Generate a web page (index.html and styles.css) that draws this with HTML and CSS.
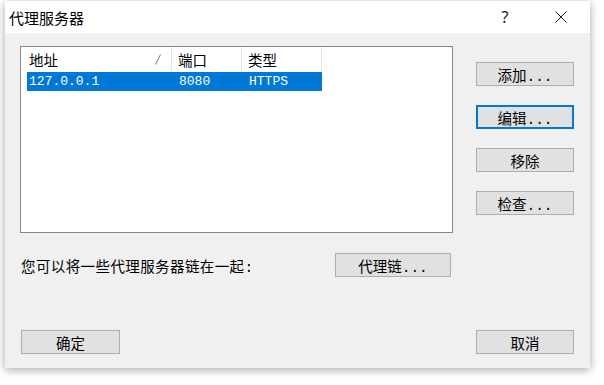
FILE: index.html
```html
<!DOCTYPE html>
<html>
<head>
    <title>代理服务器</title>
    <link rel="stylesheet" href="styles.css">
</head>

<body>
    <div class="dialog">
        <div class="titlebar">
            <span class="title">代理服务器</span>
            <span class="help">?</span>
            <svg class="close" width="12" height="12" viewBox="0 0 12 12">
                <path d="M0.5 0.5 L11.5 11.5 M11.5 0.5 L0.5 11.5" stroke="#1a1a1a" stroke-width="1" fill="none"/>
            </svg>
        </div>

        <div class="content">
            <div class="top">
                <div class="list">
                    <div class="list-head">
                        <div class="col c1">地址
                            <svg class="sort" width="6" height="11" viewBox="0 0 6 11">
                                <path d="M0.5 10.5 L5.5 0.5" stroke="#7a7a7a" stroke-width="1" fill="none"/>
                            </svg>
                        </div>
                        <div class="col c2">端口</div>
                        <div class="col c3">类型</div>
                    </div>
                    <div class="row selected">
                        <div class="cell c1">127.0.0.1</div>
                        <div class="cell c2">8080</div>
                        <div class="cell c3">HTTPS</div>
                    </div>
                </div>

                <div class="side">
                    <div class="btn">添加...</div>
                    <div class="btn focus">编辑...</div>
                    <div class="btn">移除</div>
                    <div class="btn">检查...</div>
                </div>
            </div>

            <div class="chain">
                <span class="label">您可以将一些代理服务器链在一起:</span>
                <div class="btn chain-btn">代理链...</div>
            </div>

            <div class="bottom">
                <div class="btn ok">确定</div>
                <div class="btn cancel">取消</div>
            </div>
        </div>
    </div>
</body>
</html>
```

FILE: styles.css
```css
* {
    box-sizing: border-box;
    margin: 0;
    padding: 0;
}

html, body {
    height: 385px;
    overflow: hidden;
}

body {
    background: #ffffff;
    font-family: "Liberation Mono", "Noto Sans CJK SC", monospace;
    font-size: 14.5px;
    color: #000;
}

.dialog {
    width: 585px;
    height: 367px;
    margin: 1px 0 0 5px;
    background: #f0f0f0;
    box-shadow: 0 2px 9px rgba(0, 0, 0, 0.35);
    display: flex;
    flex-direction: column;
}

.titlebar {
    height: 32px;
    background: #ffffff;
    display: flex;
    align-items: center;
    padding: 0 23px 0 4px;
}

.title {
    flex: 1;
    font-family: "Noto Sans CJK SC", sans-serif;
    font-size: 15px;
    color: #000;
}

.help {
    width: 20px;
    text-align: center;
    font-family: "Noto Sans", sans-serif;
    font-size: 16px;
    color: #1a1a1a;
    margin-right: 40px;
}

.close {
    display: block;
}

.content {
    flex: 1;
    display: flex;
    flex-direction: column;
    padding: 13px 16px 14px 15px;
}

.top {
    display: flex;
}

.list {
    width: 433px;
    height: 187px;
    background: #ffffff;
    border: 1px solid #828790;
}

.list-head {
    display: flex;
    height: 25px;
}

.col {
    display: flex;
    align-items: center;
    justify-content: space-between;
    padding-left: 8px;
    border-right: 1px solid #e5e5e5;
    height: 24px;
}

.list-head .c1 {
    width: 151px;
    padding-right: 10px;
}

.list-head .c2 {
    width: 70px;
    padding-left: 6px;
}

.list-head .c3 {
    width: 80px;
    padding-left: 6px;
}

.sort {
    display: block;
}

.row {
    display: flex;
    margin-left: 6px;
    width: 295px;
    height: 19px;
    align-items: center;
}

.selected {
    background: #0078d7;
    color: #ffffff;
}

.cell {
    font-size: 13px;
}

.row .c1 {
    width: 145px;
    padding-left: 2px;
}

.row .c2 {
    width: 70px;
    padding-left: 7px;
}

.row .c3 {
    width: 80px;
    padding-left: 7px;
}

.side {
    display: flex;
    flex-direction: column;
    gap: 19px;
    margin-left: 23px;
    padding-top: 16px;
    width: 98px;
}

.btn {
    height: 24px;
    background: #e1e1e1;
    border: 1px solid #adadad;
    display: flex;
    align-items: center;
    justify-content: center;
    cursor: default;
}

.btn.focus {
    border: 2px solid #0078d7;
}

.chain {
    display: flex;
    align-items: center;
    margin-top: 20px;
}

.label {
    width: 315px;
    padding-left: 1px;
    letter-spacing: 0.4px;
}

.chain-btn {
    width: 116px;
}

.bottom {
    margin-top: auto;
    display: flex;
    justify-content: space-between;
}

.ok {
    width: 99px;
    margin-left: 1px;
}

.cancel {
    width: 98px;
}
```
